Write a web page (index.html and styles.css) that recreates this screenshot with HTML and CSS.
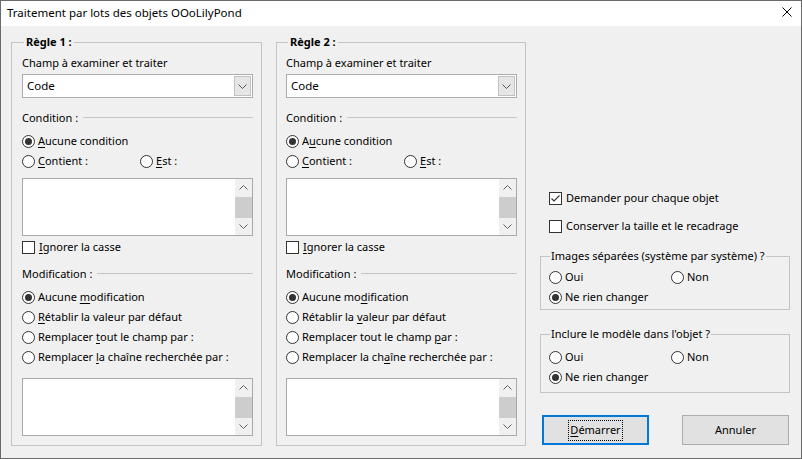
FILE: index.html
```html
<!DOCTYPE html>
<html lang="fr">
<head>
<meta charset="utf-8">
<title>Traitement par lots des objets OOoLilyPond</title>
<link rel="stylesheet" href="styles.css">
</head>
<body>
<div class="window">
  <div class="titlebar">
    <span class="title">Traitement par lots des objets OOoLilyPond</span>
    <svg class="close" width="10" height="10" viewBox="0 0 10 10"><path d="M0.5 0.5 L9.5 9.5 M9.5 0.5 L0.5 9.5" stroke="#000" stroke-width="1" fill="none"/></svg>
  </div>
  <div class="client">
    <fieldset class="group rule">
      <legend class="legend-bold">Règle 1 :</legend>
      <div class="rule-body">
        <div class="label">Champ à examiner et traiter</div>
        <div class="combo"><span class="combo-text">Code</span><span class="combo-btn"><svg width="9" height="5" viewBox="0 0 9 5"><path d="M0.5 0.5 L4.5 4.5 L8.5 0.5" stroke="#555" fill="none"/></svg></span></div>
        <div class="section">Condition :</div>
        <div class="row radio-row first"><span class="radio on"></span><span><u>A</u>ucune condition</span></div>
        <div class="row radio-row">
          <div class="opt col1"><span class="radio"></span><span><u>C</u>ontient :</span></div>
          <div class="opt"><span class="radio"></span><span><u>E</u>st :</span></div>
        </div>
        <div class="textbox"><div class="text-area"></div><div class="scrollbar"><span class="arr up"><svg width="9" height="5" viewBox="0 0 9 5"><path d="M0.5 4.5 L4.5 0.5 L8.5 4.5" stroke="#606060" fill="none"/></svg></span><span class="track"><span class="thumb"></span></span><span class="arr"><svg width="9" height="5" viewBox="0 0 9 5"><path d="M0.5 0.5 L4.5 4.5 L8.5 0.5" stroke="#606060" fill="none"/></svg></span></div></div>
        <div class="row check-row ignore"><span class="check"></span><span><u>I</u>gnorer la casse</span></div>
        <div class="section mod">Modification :</div>
        <div class="row radio-row first"><span class="radio on"></span><span>Aucune <u>m</u>odification</span></div>
        <div class="row radio-row"><span class="radio"></span><span><u>R</u>établir la valeur par défaut</span></div>
        <div class="row radio-row"><span class="radio"></span><span>Remplacer <u>t</u>out le champ par :</span></div>
        <div class="row radio-row"><span class="radio"></span><span>Remplacer <u>l</u>a chaîne recherchée par :</span></div>
        <div class="textbox last"><div class="text-area"></div><div class="scrollbar"><span class="arr up"><svg width="9" height="5" viewBox="0 0 9 5"><path d="M0.5 4.5 L4.5 0.5 L8.5 4.5" stroke="#606060" fill="none"/></svg></span><span class="track"><span class="thumb"></span></span><span class="arr"><svg width="9" height="5" viewBox="0 0 9 5"><path d="M0.5 0.5 L4.5 4.5 L8.5 0.5" stroke="#606060" fill="none"/></svg></span></div></div>
      </div>
    </fieldset>

    <fieldset class="group rule rule2">
      <legend class="legend-bold">Règle 2 :</legend>
      <div class="rule-body">
        <div class="label">Champ à examiner et traiter</div>
        <div class="combo"><span class="combo-text">Code</span><span class="combo-btn"><svg width="9" height="5" viewBox="0 0 9 5"><path d="M0.5 0.5 L4.5 4.5 L8.5 0.5" stroke="#555" fill="none"/></svg></span></div>
        <div class="section">Condition :</div>
        <div class="row radio-row first"><span class="radio on"></span><span>A<u>u</u>cune condition</span></div>
        <div class="row radio-row">
          <div class="opt col1"><span class="radio"></span><span><u>C</u>ontient :</span></div>
          <div class="opt"><span class="radio"></span><span><u>E</u>st :</span></div>
        </div>
        <div class="textbox"><div class="text-area"></div><div class="scrollbar"><span class="arr up"><svg width="9" height="5" viewBox="0 0 9 5"><path d="M0.5 4.5 L4.5 0.5 L8.5 4.5" stroke="#606060" fill="none"/></svg></span><span class="track"><span class="thumb"></span></span><span class="arr"><svg width="9" height="5" viewBox="0 0 9 5"><path d="M0.5 0.5 L4.5 4.5 L8.5 0.5" stroke="#606060" fill="none"/></svg></span></div></div>
        <div class="row check-row ignore"><span class="check"></span><span><u>I</u>gnorer la casse</span></div>
        <div class="section mod">Modification :</div>
        <div class="row radio-row first"><span class="radio on"></span><span>Aucune mo<u>d</u>ification</span></div>
        <div class="row radio-row"><span class="radio"></span><span>Rétablir la <u>v</u>aleur par défaut</span></div>
        <div class="row radio-row"><span class="radio"></span><span>Remplacer tout le champ <u>p</u>ar :</span></div>
        <div class="row radio-row"><span class="radio"></span><span>Remplacer la ch<u>a</u>îne recherchée par :</span></div>
        <div class="textbox last"><div class="text-area"></div><div class="scrollbar"><span class="arr up"><svg width="9" height="5" viewBox="0 0 9 5"><path d="M0.5 4.5 L4.5 0.5 L8.5 4.5" stroke="#606060" fill="none"/></svg></span><span class="track"><span class="thumb"></span></span><span class="arr"><svg width="9" height="5" viewBox="0 0 9 5"><path d="M0.5 0.5 L4.5 4.5 L8.5 0.5" stroke="#606060" fill="none"/></svg></span></div></div>
      </div>
    </fieldset>

    <div class="side">
      <div class="row check-row ask"><span class="check on"><svg width="11" height="11" viewBox="0 0 11 11"><path d="M1.5 5.5 L4 8 L9.5 2.5" stroke="#333" stroke-width="1.1" fill="none"/></svg></span><span>Demander pour chaque objet</span></div>
      <div class="row check-row keep"><span class="check"></span><span>Conserver la taille et le recadrage</span></div>

      <fieldset class="group opts images">
        <legend class="legend-plain">Images séparées (système par système) ?</legend>
        <div class="row radio-row">
          <div class="opt col-oui"><span class="radio"></span><span>Oui</span></div>
          <div class="opt"><span class="radio"></span><span>Non</span></div>
        </div>
        <div class="row radio-row"><span class="radio on"></span><span>Ne rien changer</span></div>
      </fieldset>

      <fieldset class="group opts model">
        <legend class="legend-plain">Inclure le modèle dans l'objet ?</legend>
        <div class="row radio-row">
          <div class="opt col-oui"><span class="radio"></span><span>Oui</span></div>
          <div class="opt"><span class="radio"></span><span>Non</span></div>
        </div>
        <div class="row radio-row"><span class="radio on"></span><span>Ne rien changer</span></div>
      </fieldset>

      <div class="buttons">
        <button class="btn default"><span class="focus"><u>D</u>émarrer</span></button>
        <button class="btn">Annuler</button>
      </div>
    </div>
  </div>
</div>
</body>
</html>
```
FILE: styles.css
```css
* { box-sizing: border-box; }
html, body { margin: 0; padding: 0; }
body {
  font-family: "Noto Sans", "Open Sans", sans-serif;
  font-size: 11px;
  line-height: 16px;
  color: #000;
  background: #f0f0f0;
}
u { text-decoration: underline; text-underline-offset: 2px; text-decoration-thickness: 1px; }

.window {
  width: 802px;
  height: 459px;
  border: 1px solid #6a6a6a;
  display: flex;
  flex-direction: column;
  background: #f0f0f0;
}
.titlebar {
  height: 25px;
  flex: none;
  background: #fff;
  display: flex;
  align-items: center;
  padding: 0 9px 0 6px;
}
.title { flex: 1; margin-top: -1px; font-size: 11.5px; }
.close { flex: none; margin-top: -4px; }

.client {
  flex: 1;
  display: flex;
  padding: 8px 11px 12px 10px;
  gap: 14px;
}

.group {
  margin: 0;
  border: 1px solid #c4c4c4;
  min-width: 0;
}
.rule {
  width: 251px;
  flex: none;
  padding: 0 8px 8px 10px;
}
.rule2 { width: 250px; padding-left: 9px; }
.legend-bold {
  font-weight: bold;
  padding: 0 2px;
  margin-left: 2px;
  line-height: 16px;
  white-space: nowrap;
}
.legend-plain {
  padding: 0 1px;
  margin-left: 1px;
  line-height: 16px;
  white-space: nowrap;
}

.rule-body { display: flex; flex-direction: column; padding-top: 5px; }
.label { height: 16px; }

.combo {
  margin-top: 3px;
  height: 24px;
  border: 1px solid #adadad;
  background: #fff;
  display: flex;
  align-items: center;
  padding: 1px;
}
.combo-text { flex: 1; padding-left: 3px; font-size: 11.5px; }
.combo-btn {
  width: 17px;
  height: 20px;
  border: 1px solid #c2c2c2;
  background: #e6e6e6;
  display: flex;
  align-items: center;
  justify-content: center;
}
.combo-btn svg { display: block; margin-top: 1px; }

.section {
  margin-top: 12px;
  height: 16px;
  display: flex;
  align-items: center;
  gap: 5px;
}
.section::after {
  content: "";
  flex: 1;
  height: 1px;
  background: #c4c4c4;
  margin-top: -1px;
}
.section.mod { margin-top: 11px; }

.row { display: flex; align-items: center; white-space: nowrap; }
.radio-row { height: 20px; gap: 3px; }
.radio-row.first { margin-top: 5px; }
.opt { display: flex; align-items: center; gap: 3px; }
.col1 { width: 115px; }
.col-oui { width: 119px; }

.radio {
  width: 13px;
  height: 13px;
  flex: none;
  border: 1px solid #333;
  border-radius: 50%;
  background: #fff;
  display: flex;
  align-items: center;
  justify-content: center;
}
.radio.on::after {
  content: "";
  width: 7px;
  height: 7px;
  border-radius: 50%;
  background: #333;
}

.check-row { height: 16px; gap: 4px; }
.check {
  width: 13px;
  height: 13px;
  flex: none;
  border: 1px solid #333;
  background: #fff;
  display: flex;
  align-items: center;
  justify-content: center;
}
.check svg { display: block; }
.ignore { margin-top: 3px; }

.textbox {
  margin-top: 7px;
  height: 58px;
  border: 1px solid #a9a9a9;
  background: #fff;
  display: flex;
}
.textbox.last { margin-top: 11px; }
.text-area { flex: 1; }
.scrollbar {
  width: 17px;
  flex: none;
  background: #f0f0f0;
  display: flex;
  flex-direction: column;
}
.arr {
  height: 17px;
  flex: none;
  display: flex;
  align-items: center;
  justify-content: center;
}
.arr svg { display: block; }
.track { flex: 1; display: flex; flex-direction: column; padding-top: 1px; }
.thumb { flex: 1; background: #cdcdcd; }

.side {
  width: 250px;
  flex: none;
  display: flex;
  flex-direction: column;
  justify-content: flex-end;
  padding-bottom: 1px;
}
.side > .check-row { padding-left: 9px; }
.keep { margin-top: 12px; }

.opts {
  padding: 0 8px 2px 8px;
}
.opts .radio-row:first-of-type { margin-top: 3px; }
.images { margin-top: 14px; }
.model { margin-top: 16px; padding-bottom: 5px; }
.model .radio-row:first-of-type { margin-top: 5px; }

.buttons {
  margin-top: 22px;
  display: flex;
  justify-content: space-between;
  padding: 0 1px 0 2px;
}
.btn {
  font: inherit;
  width: 107px;
  height: 30px;
  background: #e1e1e1;
  border: 1px solid #adadad;
  padding: 0;
  color: #000;
  display: flex;
  align-items: center;
  justify-content: center;
}
.btn.default {
  border: 2px solid #0078d7;
}
.focus {
  outline: 1px dotted #000;
  padding: 1px 1px 2px 1px;
}
```
